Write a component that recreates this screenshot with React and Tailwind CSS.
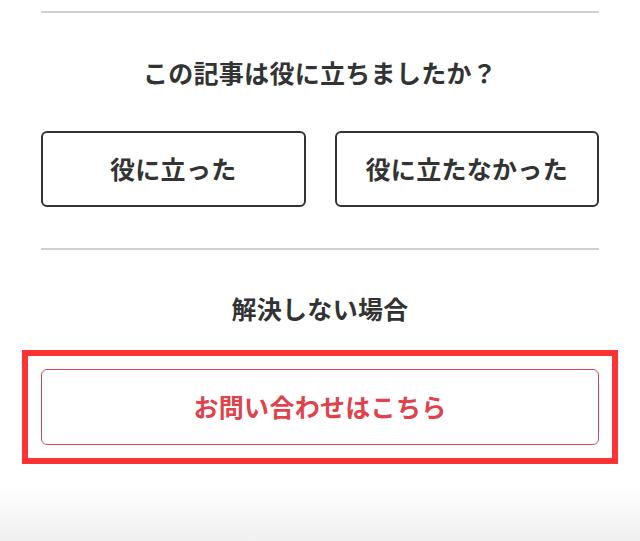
import React from 'react';

const App = () => {
  return (
    <div
      className="w-[640px] h-[541px] overflow-hidden bg-white relative text-[#333]"
      style={{ fontFamily: '"Noto Sans CJK JP", "Noto Sans", sans-serif' }}
    >
      <div className="px-[41px] pt-[11px]">
        {/* Feedback */}
        <div className="border-t-2 border-[#d0d0d0]" />
        <h2 className="mt-[44px] text-center text-[25px] leading-[30px] font-bold tracking-[0.3px]">
          この記事は役に立ちましたか？
        </h2>
        <div className="mt-[44px] grid grid-cols-2 gap-[29px]">
          <button className="h-[76px] rounded-[6px] border-2 border-[#333] bg-white text-[25px] font-bold tracking-[0.3px]">
            役に立った
          </button>
          <button className="h-[76px] rounded-[6px] border-2 border-[#333] bg-white text-[25px] font-bold tracking-[0.3px]">
            役に立たなかった
          </button>
        </div>
        <div className="mt-[41px] border-t-2 border-[#d0d0d0]" />

        {/* Contact */}
        <p className="mt-[43px] text-center text-[25px] leading-[30px] font-bold tracking-[0.3px]">
          解決しない場合
        </p>
        <div className="mt-[27px] -mx-[19px] border-[6px] border-[#ff3333] p-[13px]">
          <button className="w-full h-[76px] rounded-[6px] border-[1.5px] border-[#cc4d55] bg-white text-[25px] font-bold tracking-[0.3px] text-[#e0424c]">
            お問い合わせはこちら
          </button>
        </div>
      </div>
      <div className="absolute bottom-0 left-0 right-0 h-[55px] bg-gradient-to-b from-white to-[#efefef]" />
    </div>
  );
};

export default App;
